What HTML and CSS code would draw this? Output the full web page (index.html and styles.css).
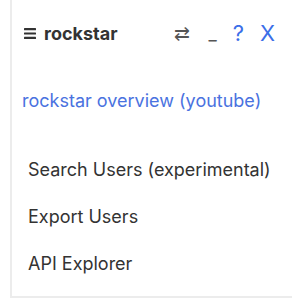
FILE: index.html
```html
<!DOCTYPE html>
<html>
<head>
<meta charset="utf-8">
<link rel="stylesheet" href="styles.css">
</head>
<body>
<div class="panel">
  <div class="header">
    <div class="title">
      <svg class="burger" width="12" height="11" viewBox="0 0 12 11"><rect x="0" y="0" width="12" height="2.2" rx="0.5"/><rect x="0" y="4.4" width="12" height="2.2" rx="0.5"/><rect x="0" y="8.8" width="12" height="2.2" rx="0.5"/></svg>
      <span>rockstar</span>
    </div>
    <div class="controls">
      <span class="ctl swap">&#8644;</span>
      <span class="ctl min">_</span>
      <span class="ctl help">?</span>
      <span class="ctl close">X</span>
    </div>
  </div>
  <a class="link" href="#">rockstar overview (youtube)</a>
  <ul class="menu">
    <li>Search Users (experimental)</li>
    <li>Export Users</li>
    <li>API Explorer</li>
  </ul>
</div>
</body>
</html>
```
FILE: styles.css
```css
html, body { margin: 0; padding: 0; background: #fff; }
body { font-family: Inter, "Noto Sans", sans-serif; }
.panel {
  margin-left: 10px;
  width: 280px;
  height: 296px;
  border-left: 2px solid #ececec;
  border-bottom: 2px solid #ececec;
  box-sizing: content-box;
}
.header {
  display: flex;
  align-items: center;
  justify-content: space-between;
  padding: 20px 17px 0 12px;
  height: 26px;
}
.title { font-weight: 700; font-size: 18px; color: #333; display: flex; align-items: center; gap: 8px; }
.burger { fill: #333; margin-top: 1px; }
.controls { display: flex; align-items: center; gap: 16px; }
.ctl { font-size: 18px; color: #555; }
.swap { font-size: 19px; margin-right: 3px; }
.min { font-size: 18px; }
.help, .close { color: #3b6ee8; font-size: 22px; }
.link {
  display: block;
  margin: 44px 0 0 10px;
  color: #4a72e0;
  text-decoration: none;
  font-size: 18px;
}
.menu { list-style: none; margin: 48px 0 0 0; padding: 0 0 0 16px; }
.menu li { font-size: 18px; color: #333; height: 47px; line-height: 22px; }
```
